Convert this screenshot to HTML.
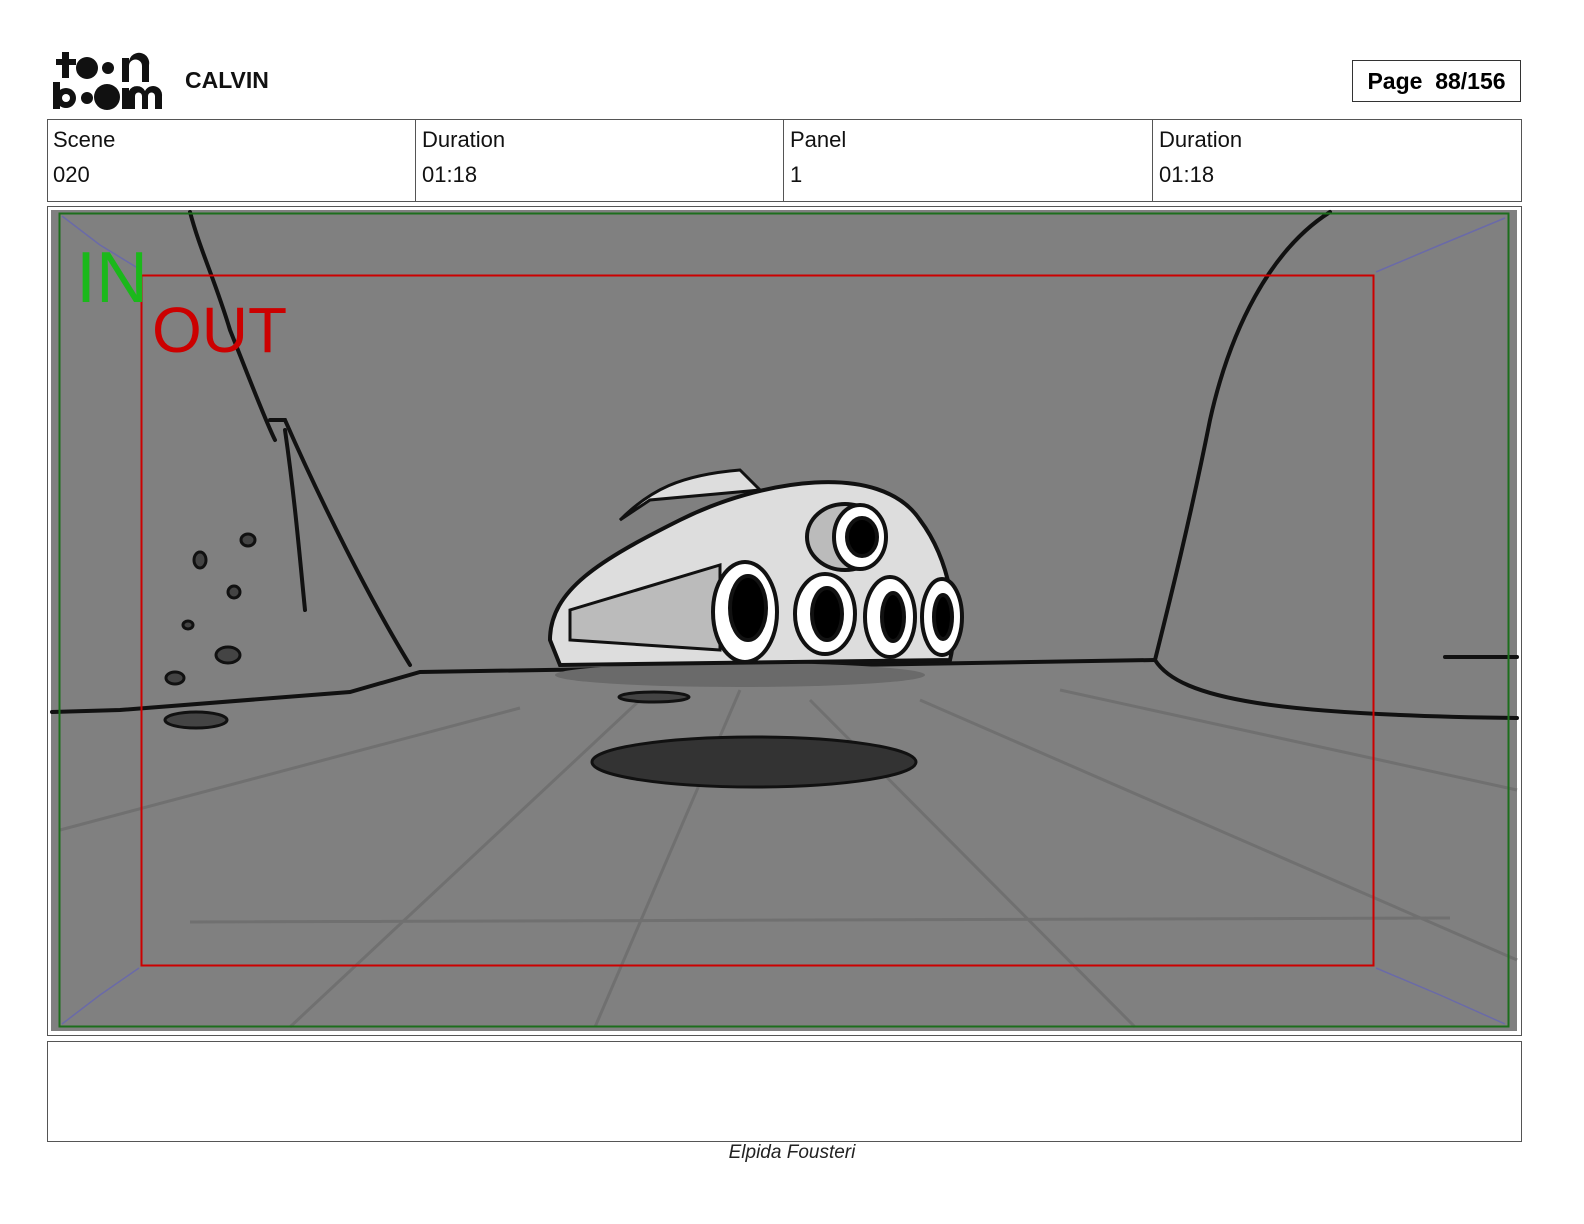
<!DOCTYPE html>
<html><head><meta charset="utf-8"><style>
*{margin:0;padding:0;box-sizing:border-box}
html,body{width:1584px;height:1224px;overflow:hidden}
body{background:#fff;position:relative;font-family:"Liberation Sans",sans-serif}
.a{position:absolute}
.cell{position:absolute;top:119px;height:82px;border-left:1px solid #555;font-size:22px;color:#111;padding-left:6px}
.cell div{height:35px;line-height:42px}
</style></head><body>
<div class="a" style="left:52px;top:46px;width:112px;height:66px">
<svg width="112" height="66" viewBox="0 0 112 66">
<g fill="#111">
<rect x="10" y="6" width="7" height="26"/><rect x="4" y="13" width="20" height="6"/>
<circle cx="35" cy="22" r="11"/><circle cx="56" cy="22" r="6"/>
<path d="M70 36V12h7v3a10 10 0 0 1 20 4v17h-7V20a4 4 0 0 0-13 0v16z"/>
<rect x="1" y="36" width="7" height="27"/><circle cx="14" cy="52" r="10"/><circle cx="14" cy="52" r="4" fill="#fff"/>
<circle cx="35" cy="52" r="6"/><circle cx="55" cy="51" r="13"/>
<path d="M70 63V42h7v3a9 9 0 0 1 16 0a9 9 0 0 1 17 5v13h-7V50a3 3 0 0 0-7 0v13h-6V50a3 3 0 0 0-7 0v13z"/>
</g></svg></div>
<div class="a" style="left:185px;top:67px;font-size:23px;font-weight:bold;color:#111">CALVIN</div>
<div class="a" style="left:1352px;top:60px;width:169px;height:42px;border:1px solid #333;font-size:23px;font-weight:bold;line-height:40px;text-align:center">Page&nbsp; 88/156</div>
<div class="a" style="left:47px;top:119px;width:1475px;height:83px;border:1px solid #555"></div>
<div class="cell" style="left:47px;border:none"><div>Scene</div><div>020</div></div>
<div class="cell" style="left:415px"><div>Duration</div><div>01:18</div></div>
<div class="cell" style="left:783px"><div>Panel</div><div>1</div></div>
<div class="cell" style="left:1152px"><div>Duration</div><div>01:18</div></div>
<div class="a" style="left:47px;top:206px;width:1475px;height:830px;border:1px solid #555"></div>
<svg class="a" style="left:0;top:0;overflow:hidden" width="1584" height="1224">
<rect x="51" y="210" width="1466" height="821" fill="#808080"/>
<g stroke="#707070" stroke-width="3" fill="none">
<path d="M520 708L60 830M640 700L290 1027M740 690L595 1027M810 700L1135 1027M920 700L1517 960M1060 690L1517 790M190 922L1450 918"/>
</g>
<g stroke="#111" stroke-width="4" fill="none" stroke-linecap="round">
<path d="M190 212C200 250 215 280 230 330C250 380 265 420 275 440"/>
<path d="M270 420L285 420C320 500 370 600 410 665"/>
<path d="M285 430C295 500 300 560 305 610"/>
<path d="M52 712L120 710L350 692L420 672L1155 660"/>
<path d="M1330 212C1270 250 1230 330 1210 420C1190 520 1170 600 1155 660C1180 700 1280 715 1517 718"/>
<path d="M1445 657L1517 657"/>
</g>
<g fill="#444" stroke="#111" stroke-width="3">
<ellipse cx="200" cy="560" rx="6" ry="8"/><ellipse cx="248" cy="540" rx="7" ry="6"/><ellipse cx="234" cy="592" rx="6" ry="6"/>
<ellipse cx="188" cy="625" rx="5" ry="4"/><ellipse cx="228" cy="655" rx="12" ry="8"/><ellipse cx="175" cy="678" rx="9" ry="6"/>
<ellipse cx="196" cy="720" rx="31" ry="8"/><ellipse cx="654" cy="697" rx="35" ry="5"/>
</g>
<ellipse cx="754" cy="762" rx="162" ry="25" fill="#333" stroke="#111" stroke-width="3"/>
<ellipse cx="740" cy="675" rx="185" ry="12" fill="#6a6a6a"/>
<path d="M620 520C650 490 680 475 740 470L760 490L650 500z" fill="#ddd" stroke="#111" stroke-width="3"/>
<path d="M550 640C550 590 600 560 680 520C760 480 880 460 920 520C950 560 960 620 950 660L560 665z" fill="#ddd" stroke="#111" stroke-width="4"/>
<path d="M570 640L570 610L720 565L720 650z" fill="#bbb" stroke="#111" stroke-width="3"/>
<g stroke="#111" stroke-width="4">
<ellipse cx="845" cy="537" rx="38" ry="33" fill="#bbb"/><ellipse cx="860" cy="537" rx="26" ry="32" fill="#fff"/><ellipse cx="862" cy="537" rx="15" ry="19" fill="#000"/>
<ellipse cx="942" cy="617" rx="20" ry="38" fill="#fff"/><ellipse cx="943" cy="617" rx="9" ry="22" fill="#000"/>
<ellipse cx="890" cy="617" rx="25" ry="40" fill="#fff"/><ellipse cx="893" cy="617" rx="11" ry="24" fill="#000"/>
<ellipse cx="825" cy="614" rx="30" ry="40" fill="#fff"/><ellipse cx="827" cy="614" rx="15" ry="26" fill="#000"/>
<ellipse cx="745" cy="612" rx="32" ry="50" fill="#fff"/><ellipse cx="748" cy="608" rx="18" ry="32" fill="#000"/>
</g>
<rect x="59.5" y="213.5" width="1449" height="813" fill="none" stroke="#1c6e1c" stroke-width="2"/>
<rect x="141.5" y="275.5" width="1232" height="690" fill="none" stroke="#c00" stroke-width="2"/>
<g stroke="#6a6aa8" stroke-width="1.5" fill="none">
<path d="M62 216L100 245L141 270"/><path d="M1505 218L1440 245L1376 272"/>
<path d="M62 1024L100 995L139 968"/><path d="M1505 1024L1440 995L1376 968"/>
</g>
<text x="76" y="302" font-family="Liberation Sans" font-size="72" fill="#1bb81b">IN</text>
<text x="152" y="352" font-family="Liberation Sans" font-size="64" fill="#c00">OUT</text>
</svg>
<div class="a" style="left:47px;top:1041px;width:1475px;height:101px;border:1px solid #555"></div>
<div class="a" style="left:0;width:1584px;top:1142px;text-align:center;font-size:19px;font-style:italic;color:#222">Elpida Fousteri</div>
</body></html>
